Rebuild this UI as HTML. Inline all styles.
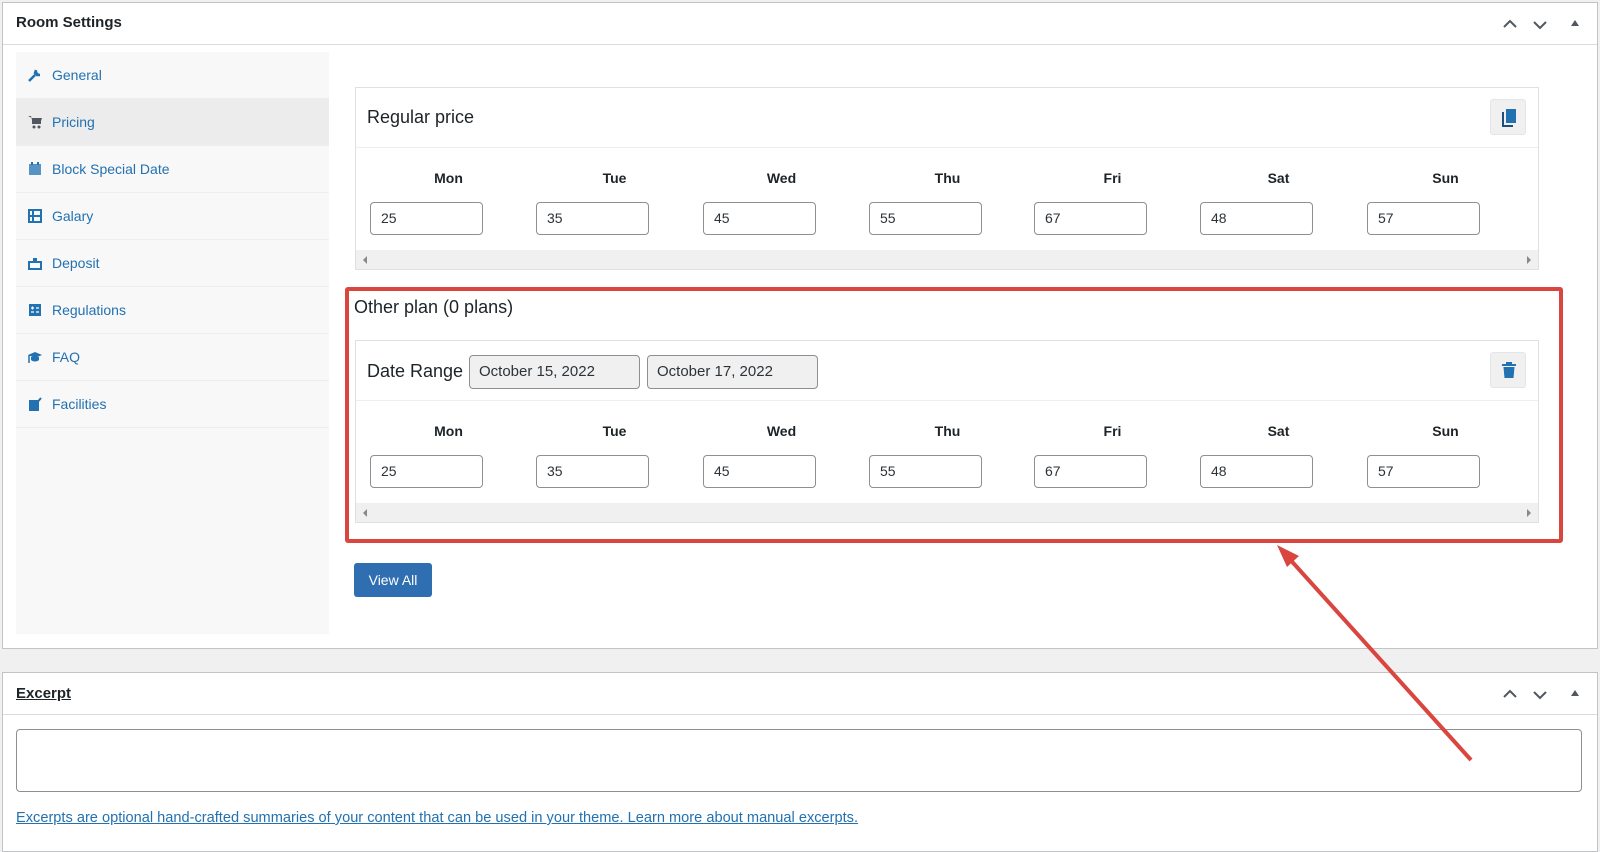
<!DOCTYPE html>
<html><head><meta charset="utf-8"><style>
*{box-sizing:border-box;margin:0;padding:0}
body{width:1600px;height:843px;background:#f0f0f1;font-family:"Liberation Sans",sans-serif;color:#1d2327;position:relative;overflow:hidden}
.a{position:absolute}
.panel{position:absolute;background:#fff;border:1px solid #c3c4c7}
.side a{position:absolute;left:0;width:313px;height:47px;color:#2271b1;font-size:14px;text-decoration:none;line-height:47px;padding-left:36px;border-bottom:1px solid #eee}
.side svg{position:absolute;left:12px;top:16px}
.inp{position:absolute;width:113px;height:33px;border:1px solid #8c8f94;border-radius:4px;background:#fff;font-size:14px;line-height:31px;padding-left:10px;color:#2c3338}
.lbl{position:absolute;width:113px;text-align:center;font-weight:bold;font-size:14px;padding-left:44px}
.sb{position:absolute;height:19px;background:#f0f0f1}
.btn{position:absolute;width:36px;height:36px;background:#f0f0f1;border:1px solid #e5e5e5;border-radius:3px}
</style></head><body>
<div class="panel" style="left:2px;top:2px;width:1596px;height:647px"></div>
<div class="a" style="left:3px;top:44px;width:1594px;height:1px;background:#dcdcde"></div>
<div class="a" style="left:16px;top:14px;font-size:15px;font-weight:bold;color:#1d2327">Room Settings</div>
<svg class="a" style="left:1500px;top:14px" width="100" height="20"><path d="M4 13 L10 7 L16 13" stroke="#50575e" stroke-width="2" fill="none"/><path d="M34 8 L40 14 L46 8" stroke="#50575e" stroke-width="2" fill="none"/><path d="M71 12 L75 6 L79 12Z" fill="#50575e"/></svg>

<div class="a side" style="left:16px;top:52px;width:313px;height:582px;background:#f8f8f8">
<a style="top:0">General<svg width="14" height="14"><path d="M1 13 L7 7 M8 2 a4 4 0 0 0 4 5 L9 7 L7 5Z" stroke="#2271b1" stroke-width="2.5" fill="#2271b1"/></svg></a>
<a style="top:47px;background:#ececec">Pricing<svg width="14" height="14"><path d="M0 1h3l2 8h7l2-6H4" fill="#50575e"/><rect x="4" y="3" width="9" height="6" fill="#50575e"/><circle cx="6" cy="12" r="1.5" fill="#50575e"/><circle cx="11" cy="12" r="1.5" fill="#50575e"/></svg></a>
<a style="top:94px">Block Special Date<svg width="14" height="14"><rect x="1" y="2" width="12" height="11" fill="#2271b1" opacity=".75"/><rect x="3" y="0" width="2" height="3" fill="#2271b1"/><rect x="9" y="0" width="2" height="3" fill="#2271b1"/></svg></a>
<a style="top:141px">Galary<svg width="14" height="14"><rect x="1" y="1" width="12" height="12" fill="none" stroke="#2271b1" stroke-width="2"/><path d="M1 7h12M5 1v12" stroke="#2271b1" stroke-width="2"/></svg></a>
<a style="top:188px">Deposit<svg width="14" height="14"><rect x="1" y="6" width="12" height="7" fill="none" stroke="#2271b1" stroke-width="2"/><rect x="5" y="2" width="4" height="4" fill="#2271b1"/></svg></a>
<a style="top:235px">Regulations<svg width="14" height="14"><rect x="1" y="1" width="12" height="12" fill="#2271b1"/><path d="M3 5h3M4.5 3.5v3M8 5h3M3 9h3M8 9h3" stroke="#fff" stroke-width="1.2"/></svg></a>
<a style="top:282px">FAQ<svg width="14" height="14"><path d="M0 5 L7 2 L14 5 L7 8Z" fill="#2271b1"/><path d="M3 7v3c2 2 6 2 8 0V7" fill="#2271b1"/><path d="M1 5v8" stroke="#2271b1" stroke-width="1.5"/></svg></a>
<a style="top:329px">Facilities<svg width="14" height="14"><rect x="1" y="3" width="10" height="11" fill="#2271b1"/><path d="M7 8 L13 1" stroke="#2271b1" stroke-width="2"/></svg></a>
</div>

<div class="a" style="left:355px;top:87px;width:1184px;height:183px;border:1px solid #e0e0e0;background:#fff"></div>
<div class="a" style="left:356px;top:147px;width:1182px;height:1px;background:#eee"></div>
<div class="a" style="left:367px;top:107px;font-size:18px;color:#1d2327">Regular price</div>
<div class="btn" style="left:1490px;top:99px"><svg width="36" height="36"><rect x="15" y="9" width="10" height="14" fill="#2271b1"/><path d="M12 12v14h10" stroke="#1d4f7a" stroke-width="2" fill="none"/></svg></div>
<div class="sb" style="left:356px;top:250px;width:1182px"></div>
<svg class="a" style="left:361px;top:256px" width="8" height="8"><path d="M6 0 L2 4 L6 8Z" fill="#888"/></svg>
<svg class="a" style="left:1525px;top:256px" width="8" height="8"><path d="M2 0 L6 4 L2 8Z" fill="#888"/></svg>

<div class="a" style="left:354px;top:297px;font-size:18px;color:#1d2327">Other plan (0 plans)</div>
<div class="a" style="left:355px;top:340px;width:1184px;height:183px;border:1px solid #e0e0e0;background:#fff"></div>
<div class="a" style="left:356px;top:400px;width:1182px;height:1px;background:#eee"></div>
<div class="a" style="left:367px;top:361px;font-size:18px;color:#1d2327">Date Range</div>
<div class="a" style="left:469px;top:355px;width:171px;height:34px;border:1px solid #8c8f94;border-radius:4px;background:#f0f0f1;font-size:15px;line-height:32px;padding-left:9px;color:#2c3338">October 15, 2022</div>
<div class="a" style="left:647px;top:355px;width:171px;height:34px;border:1px solid #8c8f94;border-radius:4px;background:#f0f0f1;font-size:15px;line-height:32px;padding-left:9px;color:#2c3338">October 17, 2022</div>
<div class="btn" style="left:1490px;top:352px"><svg width="36" height="36"><path d="M11 12h14M16 12v-2h4v2" stroke="#2271b1" stroke-width="2" fill="none"/><path d="M12.5 14h11l-1 11h-9Z" fill="#2271b1"/></svg></div>
<div class="sb" style="left:356px;top:503px;width:1182px"></div>
<svg class="a" style="left:361px;top:509px" width="8" height="8"><path d="M6 0 L2 4 L6 8Z" fill="#888"/></svg>
<svg class="a" style="left:1525px;top:509px" width="8" height="8"><path d="M2 0 L6 4 L2 8Z" fill="#888"/></svg>

<div class="lbl" style="left:370px;top:170px">Mon</div><div class="inp" style="left:370px;top:202px">25</div>
<div class="lbl" style="left:536px;top:170px">Tue</div><div class="inp" style="left:536px;top:202px">35</div>
<div class="lbl" style="left:703px;top:170px">Wed</div><div class="inp" style="left:703px;top:202px">45</div>
<div class="lbl" style="left:869px;top:170px">Thu</div><div class="inp" style="left:869px;top:202px">55</div>
<div class="lbl" style="left:1034px;top:170px">Fri</div><div class="inp" style="left:1034px;top:202px">67</div>
<div class="lbl" style="left:1200px;top:170px">Sat</div><div class="inp" style="left:1200px;top:202px">48</div>
<div class="lbl" style="left:1367px;top:170px">Sun</div><div class="inp" style="left:1367px;top:202px">57</div>

<div class="lbl" style="left:370px;top:423px">Mon</div><div class="inp" style="left:370px;top:455px">25</div>
<div class="lbl" style="left:536px;top:423px">Tue</div><div class="inp" style="left:536px;top:455px">35</div>
<div class="lbl" style="left:703px;top:423px">Wed</div><div class="inp" style="left:703px;top:455px">45</div>
<div class="lbl" style="left:869px;top:423px">Thu</div><div class="inp" style="left:869px;top:455px">55</div>
<div class="lbl" style="left:1034px;top:423px">Fri</div><div class="inp" style="left:1034px;top:455px">67</div>
<div class="lbl" style="left:1200px;top:423px">Sat</div><div class="inp" style="left:1200px;top:455px">48</div>
<div class="lbl" style="left:1367px;top:423px">Sun</div><div class="inp" style="left:1367px;top:455px">57</div>

<div class="a" style="left:345px;top:287px;width:1218px;height:256px;border:4px solid #d9453f;border-radius:3px"></div>

<div class="a" style="left:354px;top:563px;width:78px;height:34px;background:#2f6eb0;border-radius:3px;color:#fff;font-size:14px;line-height:34px;text-align:center">View All</div>

<div class="panel" style="left:2px;top:672px;width:1596px;height:180px"></div>
<div class="a" style="left:3px;top:714px;width:1594px;height:1px;background:#dcdcde"></div>
<div class="a" style="left:16px;top:685px;font-size:15px;font-weight:bold;text-decoration:underline;color:#1d2327">Excerpt</div>
<svg class="a" style="left:1500px;top:684px" width="100" height="20"><path d="M4 13 L10 7 L16 13" stroke="#50575e" stroke-width="2" fill="none"/><path d="M34 8 L40 14 L46 8" stroke="#50575e" stroke-width="2" fill="none"/><path d="M71 12 L75 6 L79 12Z" fill="#50575e"/></svg>
<div class="a" style="left:16px;top:729px;width:1566px;height:63px;border:1px solid #8c8f94;border-radius:4px;background:#fff"></div>
<div class="a" style="left:16px;top:810px;font-size:14.6px;color:#2271b1;text-decoration:underline">Excerpts are optional hand-crafted summaries of your content that can be used in your theme. Learn more about manual excerpts.</div>

<svg class="a" style="left:0;top:0" width="1600" height="843"><path d="M1471 760 L1286 555" stroke="#d9453f" stroke-width="4"/><path d="M1277 545 L1299 556 L1287 567Z" fill="#d9453f"/></svg>
</body></html>
